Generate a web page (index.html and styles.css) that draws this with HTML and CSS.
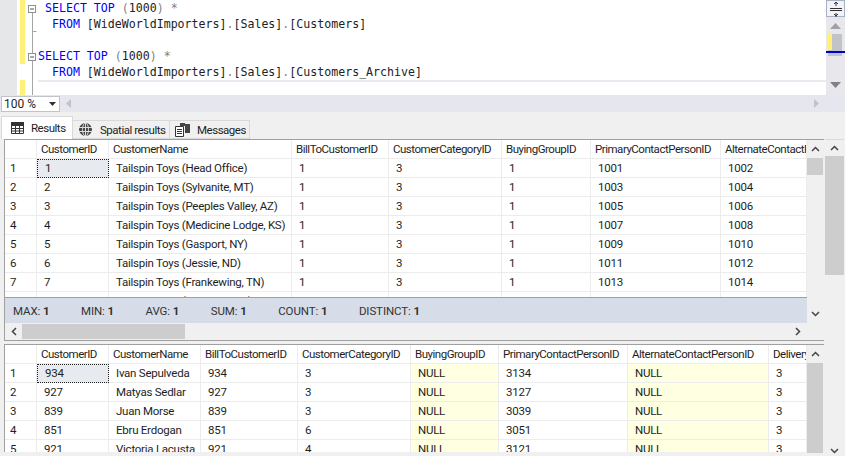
FILE: index.html
```html
<!DOCTYPE html>
<html lang="en">
<head>
  <meta charset="UTF-8">
  <title>SQL Query Results</title>
  <link rel="stylesheet" href="styles.css">
</head>
<body>

  <!-- Query editor -->
  <div class="editor">
    <div class="margin"></div>
    <div class="code">
      <div class="line"><span class="change"></span><svg class="fold" width="12" height="16"><rect x="2.5" y="5.500" width="7" height="7" fill="#fff" stroke="#8f8f8f"/><path d="M4 9h4" stroke="#555"/><path d="M6.500 13v3" stroke="#a5a5a5" fill="none"/></svg><pre> <b>SELECT TOP</b> <i>(</i>1000<i>) *</i></pre></div>
      <div class="line"><span class="change"></span><svg class="fold" width="12" height="16"><path d="M6.500 0v16M6.500 15.500h4" stroke="#a5a5a5" fill="none"/></svg><pre>  <b>FROM</b> [WideWorldImporters]<i>.</i>[Sales]<i>.</i>[Customers]</pre></div>
      <div class="line"><span class="change"></span><svg class="fold" width="12" height="16"><path d="M6.500 0v16" stroke="#a5a5a5" fill="none"/></svg><pre> </pre></div>
      <div class="line"><span class="change"></span><svg class="fold" width="12" height="16"><rect x="2.5" y="5.500" width="7" height="7" fill="#fff" stroke="#8f8f8f"/><path d="M4 9h4" stroke="#555"/><path d="M6.500 0v5M6.500 13v3" stroke="#a5a5a5" fill="none"/></svg><pre><b>SELECT TOP</b> <i>(</i>1000<i>) *</i></pre></div>
      <div class="line"><span class="change off"></span><svg class="fold" width="12" height="16"><path d="M6.500 0v16" stroke="#a5a5a5" fill="none"/></svg><pre>  <b>FROM</b> [WideWorldImporters]<i>.</i>[Sales]<i>.</i>[Customers_Archive]</pre></div>
      <div class="line"><span class="change"></span><svg class="fold" width="12" height="16"><path d="M6.500 0v16" stroke="#a5a5a5" fill="none"/></svg><pre class="current"> </pre></div>
    </div>
    <div class="editor-scroll">
      <div class="splitter"><svg width="16" height="16"><path d="M2 7.500h12M2 9.500h12" stroke="#333"/><path d="M8 1v4M8 16v-4M6 3l2-2 2 2M6 13l2 2 2-2" stroke="#333" fill="none"/></svg></div>
      <div class="arrow-up"><svg width="11" height="6"><path d="M5.500 0L11 6H0z" fill="#a0a0a8"/></svg></div>
      <div class="map"><span class="map-yellow"></span><span class="map-caret"></span></div>
      <div class="arrow-down"><svg width="11" height="6"><path d="M5.500 6L11 0H0z" fill="#80808a"/></svg></div>
    </div>
  </div>

  <!-- Zoom bar -->
  <div class="zoom-bar">
    <div class="zoom-box">100 %<svg width="7" height="4"><path d="M0 0h7L3.500 4z" fill="#333"/></svg></div>
    <svg class="zoom-left" width="5" height="9"><path d="M5 0v9L0 4.500z" fill="#c2c3c9"/></svg>
    <svg class="zoom-right" width="5" height="9"><path d="M0 0v9l5-4.500z" fill="#c2c3c9"/></svg>
  </div>

  <!-- Tabs -->
  <div class="tabs">
    <div class="tab active">
      <svg width="13" height="12"><path d="M.5.500h12v11H.5zM.5 3.500h12M.5 6.500h12M.5 9h12M4.500 3v8M8.500 3v8" fill="none" stroke="#333"/><path d="M0 0h13v3H0z" fill="#333"/></svg>
      Results
    </div>
    <div class="tab spatial">
      <svg width="15" height="15"><circle cx="7.500" cy="7.500" r="6.500" fill="#444"/><path d="M1 5.500h13M1 9.500h13M7.500 1v13" stroke="#ddd"/><ellipse cx="7.500" cy="7.500" rx="3" ry="6.500" fill="none" stroke="#ddd"/></svg>
      Spatial results
    </div>
    <div class="tab messages">
      <svg width="15" height="14"><path d="M.5 3.500h8v10h-8z" fill="#fff" stroke="#333"/><path d="M2 6.500h5M2 8.500h5M2 10.500h5" stroke="#333"/><path d="M5 0h5v3H5z" fill="#444"/><path d="M10 1h5v9h-5z" fill="#444"/></svg>
      Messages
    </div>
  </div>

  <!-- Result panes -->
  <div class="results">
    <div class="panes">

      <div class="pane first">
        <div class="pane-top">
          <div class="pane-left">
            <div class="grid-clip first-clip">
              <table class="grid">
                <colgroup><col class="c32"><col class="c72"><col class="c183"><col class="c97"><col class="c113"><col class="c89"><col class="c130"><col class="c86"></colgroup>
                <tr><th></th><th>CustomerID</th><th>CustomerName</th><th>BillToCustomerID</th><th>CustomerCategoryID</th><th>BuyingGroupID</th><th>PrimaryContactPersonID</th><th>AlternateContactPersonID</th></tr>
                <tr><td class="num">1</td><td class="selected">1</td><td>Tailspin Toys (Head Office)</td><td>1</td><td>3</td><td>1</td><td>1001</td><td>1002</td></tr>
                <tr><td class="num">2</td><td>2</td><td>Tailspin Toys (Sylvanite, MT)</td><td>1</td><td>3</td><td>1</td><td>1003</td><td>1004</td></tr>
                <tr><td class="num">3</td><td>3</td><td>Tailspin Toys (Peeples Valley, AZ)</td><td>1</td><td>3</td><td>1</td><td>1005</td><td>1006</td></tr>
                <tr><td class="num">4</td><td>4</td><td>Tailspin Toys (Medicine Lodge, KS)</td><td>1</td><td>3</td><td>1</td><td>1007</td><td>1008</td></tr>
                <tr><td class="num">5</td><td>5</td><td>Tailspin Toys (Gasport, NY)</td><td>1</td><td>3</td><td>1</td><td>1009</td><td>1010</td></tr>
                <tr><td class="num">6</td><td>6</td><td>Tailspin Toys (Jessie, ND)</td><td>1</td><td>3</td><td>1</td><td>1011</td><td>1012</td></tr>
                <tr><td class="num">7</td><td>7</td><td>Tailspin Toys (Frankewing, TN)</td><td>1</td><td>3</td><td>1</td><td>1013</td><td>1014</td></tr>
                <tr><td class="num">8</td><td>8</td><td>Tailspin Toys (Bow Mar, CO)</td><td>1</td><td>3</td><td>1</td><td>1015</td><td>1016</td></tr>
              </table>
            </div>
            <div class="aggregates">
              <span>MAX: <b>1</b></span><span>MIN: <b>1</b></span><span>AVG: <b>1</b></span><span>SUM: <b>1</b></span><span>COUNT: <b>1</b></span><span>DISTINCT: <b>1</b></span>
            </div>
          </div>
          <div class="vscroll">
            <svg class="chev" width="9" height="6"><path d="M1 5l3.500-3.500L8 5" fill="none" stroke="#444" stroke-width="1.500"/></svg>
            <div class="track"><div class="thumb first-thumb"></div></div>
            <svg class="chev" width="9" height="6"><path d="M1 1l3.500 3.500L8 1" fill="none" stroke="#444" stroke-width="1.500"/></svg>
          </div>
        </div>
        <div class="hscroll">
          <svg width="6" height="9"><path d="M5 1L1.500 4.500 5 8" fill="none" stroke="#444" stroke-width="1.500"/></svg>
          <div class="hthumb"></div>
          <svg class="hnext" width="6" height="9"><path d="M1 1l3.500 3.500L1 8" fill="none" stroke="#444" stroke-width="1.500"/></svg>
        </div>
      </div>

      <div class="pane second">
        <div class="grid-clip second-clip">
          <table class="grid">
            <colgroup><col class="c32"><col class="c72"><col class="c92"><col class="c97"><col class="c113"><col class="c88"><col class="c129"><col class="c141"><col class="c38"></colgroup>
            <tr><th></th><th>CustomerID</th><th>CustomerName</th><th>BillToCustomerID</th><th>CustomerCategoryID</th><th>BuyingGroupID</th><th>PrimaryContactPersonID</th><th>AlternateContactPersonID</th><th>DeliveryMethodID</th></tr>
            <tr><td class="num">1</td><td class="selected">934</td><td>Ivan Sepulveda</td><td>934</td><td>3</td><td class="null">NULL</td><td>3134</td><td class="null">NULL</td><td>3</td></tr>
            <tr><td class="num">2</td><td>927</td><td>Matyas Sedlar</td><td>927</td><td>3</td><td class="null">NULL</td><td>3127</td><td class="null">NULL</td><td>3</td></tr>
            <tr><td class="num">3</td><td>839</td><td>Juan Morse</td><td>839</td><td>3</td><td class="null">NULL</td><td>3039</td><td class="null">NULL</td><td>3</td></tr>
            <tr><td class="num">4</td><td>851</td><td>Ebru Erdogan</td><td>851</td><td>6</td><td class="null">NULL</td><td>3051</td><td class="null">NULL</td><td>3</td></tr>
            <tr><td class="num">5</td><td>921</td><td>Victoria Lacusta</td><td>921</td><td>4</td><td class="null">NULL</td><td>3121</td><td class="null">NULL</td><td>3</td></tr>
          </table>
        </div>
        <div class="vscroll second-scroll">
          <svg class="chev" width="9" height="6"><path d="M1 5l3.500-3.500L8 5" fill="none" stroke="#444" stroke-width="1.500"/></svg>
          <div class="track"><div class="thumb second-thumb"></div></div>
        </div>
      </div>

    </div>

    <div class="vscroll outer">
      <svg class="chev" width="9" height="6"><path d="M1 5l3.500-3.500L8 5" fill="none" stroke="#444" stroke-width="1.500"/></svg>
      <div class="track"><div class="thumb outer-thumb"></div></div>
      <svg class="chev" width="9" height="6"><path d="M1 1l3.500 3.500L8 1" fill="none" stroke="#444" stroke-width="1.500"/></svg>
    </div>
  </div>

</body>
</html>
```

FILE: styles.css
```css
/* General Styles */
* {
  box-sizing: border-box;
  margin: 0;
  padding: 0;
}

html, body {
  width: 845px;
  height: 456px;
  overflow: hidden;
}

body {
  font-family: Roboto, Arial, sans-serif;
  font-size: 11.5px;
  letter-spacing: -0.48px;
  background-color: #f0f0f0;
  color: #1e1e1e;
}

/* Editor */
.editor {
  display: flex;
  height: 95px;
  background-color: #fff;
}

.margin {
  width: 17px;
  background-color: #e6e7e8;
  margin-right: 3px;
}

.code {
  flex: 1;
  min-width: 0;
  overflow: hidden;
}

.line {
  display: flex;
  height: 16px;
}

.change {
  width: 5px;
  background-color: #fff176;
  margin-right: 1px;
}

.change.off {
  background-color: transparent;
}

.fold {
  flex: none;
}

.line pre {
  flex: 1;
  font-family: "DejaVu Sans Mono", "Liberation Mono", monospace;
  font-size: 11.6px;
  letter-spacing: 0;
  line-height: 16px;
  color: #222;
  white-space: pre;
}

.line pre b {
  font-weight: normal;
  color: #0000ff;
}

.line pre i {
  font-style: normal;
  color: #808080;
}

.line pre.current {
  border-top: 2px solid #eaeaf2;
  height: 15px;
}

.editor-scroll {
  position: relative;
  width: 19px;
  background-color: #e8e8ec;
}

.splitter {
  height: 17px;
  background-color: #f2f3f9;
  border: 1px solid #a8b0c4;
  display: flex;
  justify-content: center;
}

.arrow-up {
  text-align: center;
  height: 17px;
  padding-top: 6px;
  line-height: 0;
}

.map {
  height: 22px;
  background-color: #c2c3c9;
  margin: 0 0 0 2px;
  width: 14px;
}

.map-yellow {
  position: absolute;
  left: 2px;
  top: 34px;
  width: 4px;
  height: 16px;
  background-color: #fff176;
}

.map-caret {
  position: absolute;
  left: 0;
  top: 51px;
  width: 19px;
  height: 2px;
  background-color: #0000cd;
}

.arrow-down {
  text-align: center;
  line-height: 0;
  padding-top: 26px;
}

/* Zoom bar */
.zoom-bar {
  display: flex;
  align-items: center;
  height: 17px;
  background-color: #e6e7ee;
  padding-left: 1px;
}

.zoom-box {
  display: flex;
  align-items: center;
  justify-content: space-between;
  width: 59px;
  height: 16px;
  background-color: #fff;
  border: 1px solid #c0c2cc;
  padding: 0 3px 0 2px;
  font-size: 12px;
  letter-spacing: 0;
}

.zoom-left {
  margin-left: 6px;
}

.zoom-right {
  margin-left: auto;
  margin-right: 26px;
}

/* Tabs */
.tabs {
  display: flex;
  align-items: flex-end;
  height: 27px;
  padding-left: 1px;
}

.tab {
  display: flex;
  align-items: center;
  gap: 7px;
  height: 19px;
  padding-left: 5px;
  background-color: #f0f0f0;
  border: 1px solid #d9d9d9;
  border-left: none;
  white-space: nowrap;
}

.tab svg {
  flex: none;
}

.tab.active {
  width: 72px;
  height: 23px;
  padding: 0 0 1px 9px;
  background-color: #fff;
  border-left: 1px solid #d9d9d9;
  border-bottom: none;
}

.tab.spatial {
  width: 97px;
}

.tab.messages {
  width: 80px;
}

/* Results */
.results {
  display: flex;
  padding-left: 4px;
}

.panes {
  width: 820px;
}

.pane {
  border-left: 1px solid #a0a0a0;
}

.pane.first {
  border-top: 1px solid #a0a0a0;
  border-bottom: 1px solid #a0a0a0;
  height: 202px;
}

.pane.second {
  display: flex;
  margin-top: 3px;
  height: 108px;
  border-top: 1px solid #a0a0a0;
}

.pane-top {
  display: flex;
  height: 183px;
}

.pane-left {
  width: 802px;
}

.grid-clip {
  width: 802px;
  overflow: hidden;
  background-color: #fff;
}

.first-clip {
  height: 157px;
}

.second-clip {
  height: 107px;
}

/* Grid */
.grid {
  table-layout: fixed;
  width: 802px;
  border-collapse: separate;
  border-spacing: 0;
  background-color: #fff;
}

.c32 { width: 32px; }
.c38 { width: 38px; }
.c72 { width: 72px; }
.c86 { width: 86px; }
.c88 { width: 88px; }
.c89 { width: 89px; }
.c92 { width: 92px; }
.c97 { width: 97px; }
.c113 { width: 113px; }
.c129 { width: 129px; }
.c130 { width: 130px; }
.c141 { width: 141px; }
.c183 { width: 183px; }

.grid th,
.grid td {
  height: 19px;
  border-right: 1px solid #ececec;
  border-bottom: 1px solid #ececec;
  white-space: nowrap;
  overflow: hidden;
  font-weight: normal;
  text-align: left;
  line-height: 17px;
}

.grid th {
  padding-left: 4px;
}

.grid td {
  padding-left: 7px;
  letter-spacing: -0.25px;
}

.grid td.num {
  padding-left: 5px;
}

.grid td.selected {
  background-color: #e7ebef;
  border: 1px dotted #222;
}

.grid td.null {
  background-color: #ffffe1;
}

/* Aggregates */
.aggregates {
  display: flex;
  align-items: center;
  height: 26px;
  padding-left: 8px;
  background-color: #d6dce8;
  border-top: 1px solid #a0a0a0;
  color: #333;
  letter-spacing: -0.1px;
  font-size: 11.5px;
}

.aggregates span {
  margin-right: 31.5px;
}

/* Scrollbars */
.vscroll {
  display: flex;
  flex-direction: column;
  align-items: center;
  width: 16px;
  background-color: #f0f0f0;
}

.vscroll.outer {
  width: 19px;
  height: 315px;
  margin-left: 1px;
  padding-top: 5px;
  border-top: 1px solid #d9d9d9;
}

.chev {
  flex: none;
  margin: 6px 0;
}

.vscroll.outer .chev {
  margin: 0;
}

.track {
  flex: 1;
  width: 100%;
}

.thumb {
  background-color: #cdcdcd;
}

.first-thumb {
  height: 17px;
}

.outer-thumb {
  height: 119px;
  margin-top: 5px;
}

.second-scroll {
  height: 107px;
}

.second-thumb {
  height: 90px;
}

.hscroll {
  display: flex;
  align-items: center;
  width: 802px;
  height: 16px;
  padding-left: 6px;
}

.hthumb {
  width: 163px;
  height: 15px;
  margin-left: 5px;
  background-color: #cdcdcd;
}

.hnext {
  margin-left: auto;
  margin-right: 6px;
}
```
